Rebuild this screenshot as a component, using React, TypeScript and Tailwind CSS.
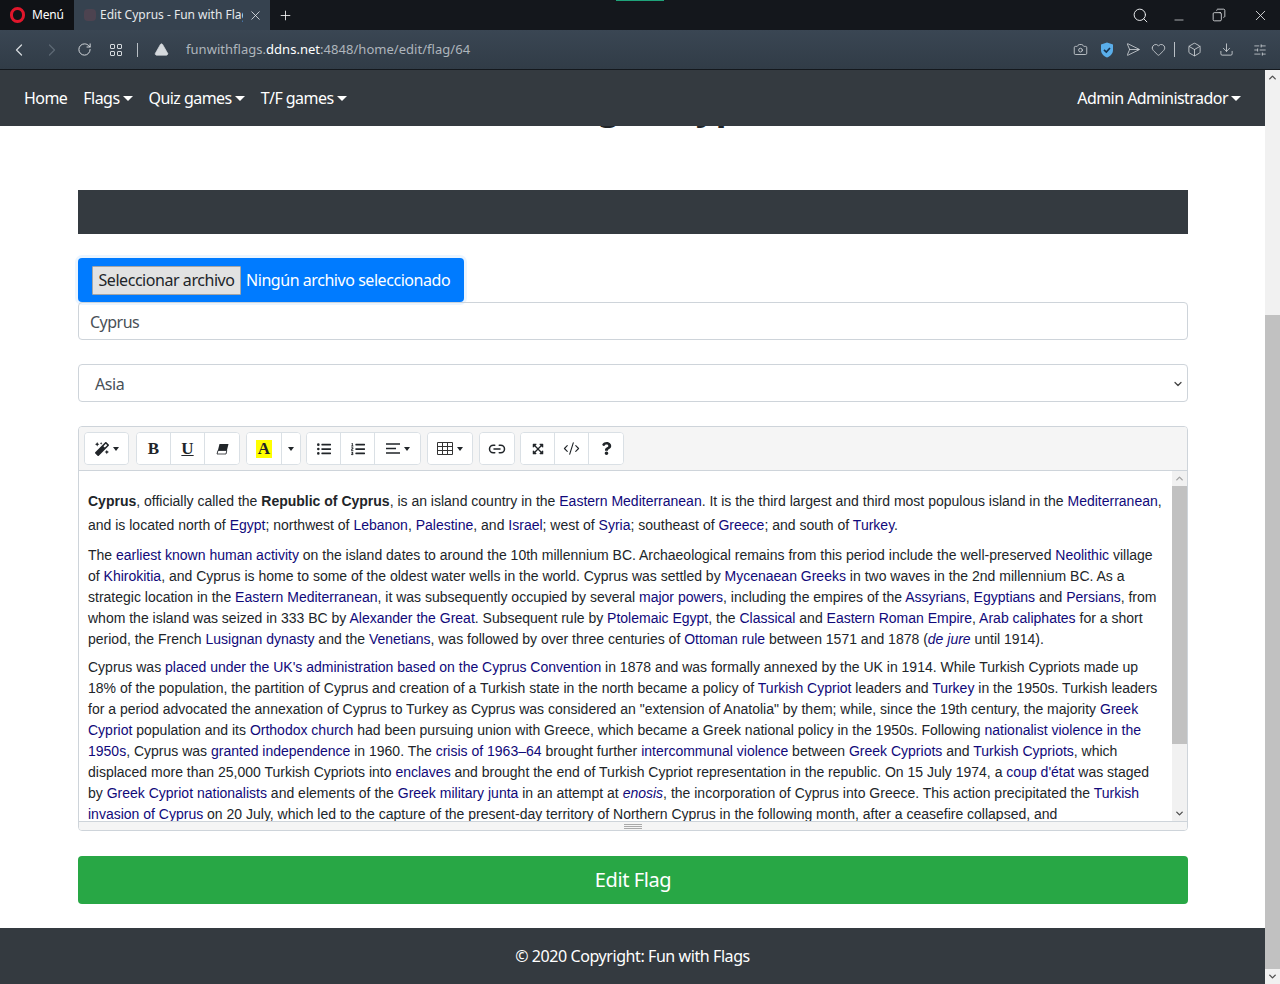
import { ReactNode } from "react"
import {
  Box,
  Camera,
  ChevronDown,
  ChevronLeft,
  ChevronRight,
  ChevronUp,
  CodeXml,
  Copy,
  Download,
  Heart,
  Link2,
  Minus,
  Plus,
  RotateCw,
  Search,
  Send,
  SlidersHorizontal,
  TriangleAlert,
  X,
} from "lucide-react"
import {
  FaExpandArrowsAlt,
  FaListOl,
  FaListUl,
  FaMagic,
  FaQuestion,
} from "react-icons/fa"

function L({ children }: { children: ReactNode }) {
  return <a className="text-[#10097a]">{children}</a>
}

function Caret({ className = "" }: { className?: string }) {
  return (
    <span
      className={`inline-block w-0 h-0 border-x-[5px] border-x-transparent border-t-[5px] border-t-current ${className}`}
    />
  )
}

function SmallCaret() {
  return <span className="inline-block w-0 h-0 border-x-[3.5px] border-x-transparent border-t-[4px] border-t-[#212529]" />
}

function ToolBtn({ children, w = "w-[34px]", last = false }: { children: ReactNode; w?: string; last?: boolean }) {
  return (
    <div className={`h-[31px] flex items-center justify-center gap-1 bg-white text-[#212529] ${w} ${last ? "" : "border-r border-[#dae0e5]"}`}>
      {children}
    </div>
  )
}

function ToolGroup({ children, className = "" }: { children: ReactNode; className?: string }) {
  return <div className={`flex border border-[#dae0e5] rounded-[4px] overflow-hidden bg-white ${className}`}>{children}</div>
}

function NavItem({ label, caret = true }: { label: string; caret?: boolean }) {
  return (
    <span className="flex items-center gap-[3px]">
      {label}
      {caret && <Caret />}
    </span>
  )
}

function BrowserBar() {
  return (
    <div>
      <div className="relative h-[30px] bg-[#14171c] flex items-center text-white text-[12px]">
        <div className="absolute top-0 left-[616px] w-[48px] h-px bg-[#1fa37a]" />
        <div className="w-[74px] h-full flex items-center pl-[10px] gap-[7px] bg-[#101216] tracking-[-0.2px]">
          <span className="w-[15px] h-[16px] rounded-full border-[3px] border-[#e0162b] block" />
          <span>Menú</span>
        </div>
        <div className="w-[196px] h-full flex items-center bg-[#36424f] pl-[10px] pr-[7px] text-[#e6e9ec]">
          <span className="w-[12px] h-[12px] rounded-sm bg-[#4d4350] mr-[4px] shrink-0" />
          <span className="flex-1 overflow-hidden whitespace-nowrap">Edit Cyprus - Fun with Flags</span>
          <X size={15} strokeWidth={1.3} className="ml-[5px] shrink-0" />
        </div>
        <Plus size={15} strokeWidth={1.3} className="ml-[8px]" />
        <div className="ml-auto flex items-center text-[#e8eaec]">
          <Search size={17} strokeWidth={1.4} className="mr-[23px]" />
          <Minus size={14} strokeWidth={1.2} className="mr-[26px] mt-[9px]" />
          <Copy size={14} strokeWidth={1.4} className="mr-[26px] -scale-x-100" />
          <X size={17} strokeWidth={1.2} className="mr-[11px]" />
        </div>
      </div>
      <div className="h-[40px] bg-gradient-to-b from-[#3a4653] to-[#313c47] border-b border-[#14181d] flex items-center text-[#d5d9dd]">
        <ChevronLeft size={20} strokeWidth={1.5} className="ml-[9px]" />
        <ChevronRight size={20} strokeWidth={1.5} className="ml-[13px] text-[#5d6874]" />
        <RotateCw size={15} strokeWidth={1.6} className="ml-[15px]" />
        <div className="ml-[18px] grid grid-cols-2 gap-[2px]">
          <span className="w-[5px] h-[5px] border border-[#d5d9dd] rounded-[1px]" />
          <span className="w-[5px] h-[5px] border border-[#d5d9dd] rounded-[1px]" />
          <span className="w-[5px] h-[5px] border border-[#d5d9dd] rounded-[1px]" />
          <span className="w-[5px] h-[5px] border border-[#d5d9dd] rounded-[1px]" />
        </div>
        <span className="ml-[15px] w-px h-[14px] bg-[#b9bfc5]" />
        <TriangleAlert size={15} fill="#d5d9dd" stroke="#d5d9dd" strokeWidth={1.2} className="ml-[16px]" />
        <span className="ml-[17px] text-[13px] text-[#aeb5bc] font-['Noto_Sans',sans-serif] tracking-[0.03px]">
          funwithflags.<span className="text-white">ddns.net</span>:4848/home/edit/flag/64
        </span>
        <div className="ml-auto flex items-center">
          <Camera size={15} strokeWidth={1.3} />
          <svg width="14" height="16" viewBox="0 0 14 16" className="ml-[12px]">
            <path d="M7 0.5 L13 2.5 V8 C13 11.5 10.5 14 7 15.5 C3.5 14 1 11.5 1 8 V2.5 Z" fill="#5aaeea" />
            <path d="M4 7.8 L6.3 10 L10 6" fill="none" stroke="#16324e" strokeWidth="1.7" />
          </svg>
          <Send size={15} strokeWidth={1.2} className="ml-[9px] rotate-45" />
          <Heart size={15} strokeWidth={1.3} className="ml-[13px]" />
          <span className="ml-[8px] w-px h-[15px] bg-[#b9bfc5]" />
          <Box size={15} strokeWidth={1.3} className="ml-[12px]" />
          <Download size={15} strokeWidth={1.3} className="ml-[17px]" />
          <SlidersHorizontal size={14} strokeWidth={1.3} className="ml-[19px] mr-[13px]" />
        </div>
      </div>
    </div>
  )
}

function Editor() {
  return (
    <div className="h-[405px] border border-[#ced4da] rounded-[4px] flex flex-col overflow-hidden">
      <div className="h-[44px] bg-[#f5f5f5] border-b border-[#ced4da] flex items-center gap-[5px] px-[5px] font-['Liberation_Sans',sans-serif]">
        <ToolGroup>
          <ToolBtn w="w-[43px]" last>
            <FaMagic size={14} />
            <SmallCaret />
          </ToolBtn>
        </ToolGroup>
        <ToolGroup className="ml-[2px]">
          <ToolBtn>
            <span className="font-['Liberation_Serif',serif] font-bold text-[17px]">B</span>
          </ToolBtn>
          <ToolBtn>
            <span className="font-['Liberation_Serif',serif] font-bold text-[17px] underline">U</span>
          </ToolBtn>
          <ToolBtn last>
            <svg width="13" height="12" viewBox="0 0 13 12">
              <path d="M3.5 1 H12.5 L10 11 H1 Z" fill="#212529" />
              <path d="M2 7.5 H10.8 L10 11 H1 Z" fill="#fff" stroke="#212529" strokeWidth="0.8" />
            </svg>
          </ToolBtn>
        </ToolGroup>
        <ToolGroup className="ml-px">
          <ToolBtn w="w-[35px]">
            <span className="bg-[#ffff00] font-['Liberation_Serif',serif] font-bold text-[17px] leading-[18px] px-[2px]">A</span>
          </ToolBtn>
          <ToolBtn w="w-[18px]" last>
            <SmallCaret />
          </ToolBtn>
        </ToolGroup>
        <ToolGroup>
          <ToolBtn>
            <FaListUl size={14} />
          </ToolBtn>
          <ToolBtn>
            <FaListOl size={14} />
          </ToolBtn>
          <ToolBtn w="w-[45px]" last>
            <svg width="14" height="11" viewBox="0 0 14 11" stroke="#212529" strokeWidth="1.5">
              <path d="M0 1 H14 M0 5.5 H10 M0 10 H14" />
            </svg>
            <SmallCaret />
          </ToolBtn>
        </ToolGroup>
        <ToolGroup className="ml-px">
          <ToolBtn w="w-[44px]" last>
            <svg width="16" height="13" viewBox="0 0 16 13" fill="none" stroke="#333" strokeWidth="1">
              <path d="M0.5 0.5 H15.5 V12.5 H0.5 Z M0.5 4.5 H15.5 M0.5 8.5 H15.5 M5.5 0.5 V12.5 M10.5 0.5 V12.5" />
            </svg>
            <SmallCaret />
          </ToolBtn>
        </ToolGroup>
        <ToolGroup className="ml-px">
          <ToolBtn last>
            <Link2 size={18} strokeWidth={2} />
          </ToolBtn>
        </ToolGroup>
        <ToolGroup>
          <ToolBtn>
            <FaExpandArrowsAlt size={12} />
          </ToolBtn>
          <ToolBtn>
            <CodeXml size={17} strokeWidth={1.6} className="text-[#212529]" />
          </ToolBtn>
          <ToolBtn last>
            <FaQuestion size={13} />
          </ToolBtn>
        </ToolGroup>
      </div>
      <div className="h-[350px] flex bg-white">
        <div className="flex-1 overflow-hidden pl-[9px] pr-[8px] pt-[18px] font-['Liberation_Sans',sans-serif] text-[14px] leading-[21px] text-[#212529]">
          <p className="leading-[24px] mb-[8px]">
            <b>Cyprus</b>, officially called the <b>Republic of Cyprus</b>, is an island country in the <L>Eastern Mediterranean</L>. It is the third largest and third most populous island in the <L>Mediterranean</L>, and is located north of <L>Egypt</L>; northwest of <L>Lebanon</L>, <L>Palestine</L>, and <L>Israel</L>; west of <L>Syria</L>; southeast of <L>Greece</L>; and south of <L>Turkey</L>.
          </p>
          <p className="mb-[7px]">
            The <L>earliest known human activity</L> on the island dates to around the 10th millennium BC. Archaeological remains from this period include the well-preserved <L>Neolithic</L> village of <L>Khirokitia</L>, and Cyprus is home to some of the oldest water wells in the world. Cyprus was settled by <L>Mycenaean Greeks</L> in two waves in the 2nd millennium BC. As a strategic location in the <L>Eastern Mediterranean</L>, it was subsequently occupied by several <L>major powers</L>, including the empires of the <L>Assyrians</L>, <L>Egyptians</L> and <L>Persians</L>, from whom the island was seized in 333 BC by <L>Alexander the Great</L>. Subsequent rule by <L>Ptolemaic Egypt</L>, the <L>Classical</L> and <L>Eastern Roman Empire</L>, <L>Arab caliphates</L> for a short period, the French <L>Lusignan dynasty</L> and the <L>Venetians</L>, was followed by over three centuries of <L>Ottoman rule</L> between 1571 and 1878 (<L><i>de jure</i></L> until 1914).
          </p>
          <p>
            Cyprus was <L>placed under the UK's administration based on the Cyprus Convention</L> in 1878 and was formally annexed by the UK in 1914. While Turkish Cypriots made up 18% of the population, the partition of Cyprus and creation of a Turkish state in the north became a policy of <L>Turkish Cypriot</L> leaders and <L>Turkey</L> in the 1950s. Turkish leaders for a period advocated the annexation of Cyprus to Turkey as Cyprus was considered an "extension of Anatolia" by them; while, since the 19th century, the majority <L>Greek Cypriot</L> population and its <L>Orthodox church</L> had been pursuing union with Greece, which became a Greek national policy in the 1950s. Following <L>nationalist violence in the 1950s</L>, Cyprus was <L>granted independence</L> in 1960. The <L>crisis of 1963–64</L> brought further <L>intercommunal violence</L> between <L>Greek Cypriots</L> and <L>Turkish Cypriots</L>, which displaced more than 25,000 Turkish Cypriots into <L>enclaves</L> and brought the end of Turkish Cypriot representation in the republic. On 15 July 1974, a <L>coup d'état</L> was staged by <L>Greek Cypriot nationalists</L> and elements of the <L>Greek military junta</L> in an attempt at <L><i>enosis</i></L>, the incorporation of Cyprus into Greece. This action precipitated the <L>Turkish invasion of Cyprus</L> on 20 July, which led to the capture of the present-day territory of Northern Cyprus in the following month, after a ceasefire collapsed, and
          </p>
        </div>
        <div className="w-[15px] shrink-0 bg-[#f1f1f1] flex flex-col text-[#505050]">
          <div className="h-[15px] flex items-center justify-center">
            <ChevronUp size={11} strokeWidth={3} className="text-[#a3a3a3]" />
          </div>
          <div className="h-[258px] bg-[#c1c1c1]" />
          <div className="flex-1" />
          <div className="h-[15px] flex items-center justify-center">
            <ChevronDown size={11} strokeWidth={3} />
          </div>
        </div>
      </div>
      <div className="flex-1 bg-[#f5f5f5] border-t border-[#ced4da] flex flex-col items-center justify-center gap-[1px]">
        <span className="w-[18px] h-px bg-[#a9a9a9]" />
        <span className="w-[18px] h-px bg-[#a9a9a9]" />
        <span className="w-[18px] h-px bg-[#a9a9a9]" />
      </div>
    </div>
  )
}

export default function App() {
  return (
    <div className="h-[984px] w-[1280px] overflow-hidden flex flex-col bg-white font-['Noto_Sans',sans-serif] text-[16px] text-[#212529]">
      <BrowserBar />
      <div className="flex flex-1 min-h-0">
        <div className="w-[1265px] flex flex-col min-w-0">
          <nav className="h-[56px] bg-[#343a40] flex items-center pl-[24px] pr-[24px] gap-[16px] text-white tracking-[-0.55px]">
            <NavItem label="Home" caret={false} />
            <NavItem label="Flags" />
            <NavItem label="Quiz games" />
            <NavItem label="T/F games" />
            <span className="ml-auto">
              <NavItem label="Admin Administrador" />
            </span>
          </nav>
          <div className="flex-1 min-h-0 overflow-hidden">
            <div className="h-[64px] overflow-hidden">
              <h1 className="text-center text-[36px] leading-[48px] font-bold -mt-[44px] tracking-[-0.5px]">Edit Flag of Cyprus</h1>
            </div>
            <div className="mx-[78px] w-[1110px]">
              <div className="h-[44px] bg-[#343a40]" />
              <div className="mt-[24px] w-[386px] h-[44px] bg-[#007bff] rounded-[4px] shadow-[0_0_0_3px_rgba(0,123,255,0.08)] flex items-center pl-[14px] gap-[5px] text-white tracking-[-0.45px]">
                <span className="h-[29px] w-[149px] bg-[#e2e2e2] border border-[#a5a5a5] rounded-[1px] flex items-center justify-center text-[#212529]">Seleccionar archivo</span>
                <span className="whitespace-nowrap">Ningún archivo seleccionado</span>
              </div>
              <div className="h-[38px] border border-[#ced4da] rounded-[4px] flex items-center pl-[11px] pr-[12px] pt-px text-[#495057] tracking-[-0.5px]">Cyprus</div>
              <div className="mt-[24px] h-[38px] border border-[#ced4da] rounded-[4px] flex items-center pl-[16px] pr-[3px] pt-px text-[#495057] tracking-[-0.45px]">
                <span>Asia</span>
                <ChevronDown size={12} strokeWidth={2.5} className="ml-auto text-[#444]" />
              </div>
              <div className="mt-[24px]">
                <Editor />
              </div>
              <div className="mt-[25px] h-[48px] bg-[#28a745] rounded-[4px] flex items-center justify-center text-white text-[20px] tracking-[-0.4px]">Edit Flag</div>
            </div>
            <footer className="mt-[24px] h-[56px] bg-[#343a40] flex items-center justify-center text-white tracking-[-0.42px]">© 2020 Copyright: Fun with Flags</footer>
          </div>
        </div>
        <div className="w-[15px] bg-[#f1f1f1] flex flex-col">
          <div className="h-[15px] flex items-center justify-center">
            <ChevronUp size={11} strokeWidth={3} className="text-[#505050]" />
          </div>
          <div className="h-[230px]" />
          <div className="flex-1 bg-[#c1c1c1]" />
          <div className="h-[15px] flex items-center justify-center">
            <ChevronDown size={11} strokeWidth={3} className="text-[#505050]" />
          </div>
        </div>
      </div>
    </div>
  )
}
